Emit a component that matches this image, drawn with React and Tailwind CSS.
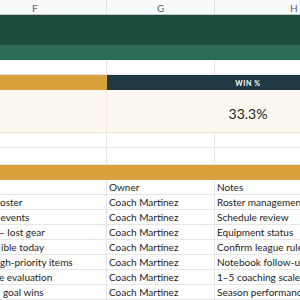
const ROWS = [
  { left: 'oster', ml: 'ml-0', owner: 'Coach Martinez', note: 'Roster management' },
  { left: 'events', ml: 'ml-[0.5px]', owner: 'Coach Martinez', note: 'Schedule review' },
  { left: '– lost gear', ml: 'ml-[-1px]', owner: 'Coach Martinez', note: 'Equipment status' },
  { left: 'ible today', ml: 'ml-[1px]', owner: 'Coach Martinez', note: 'Confirm league rules' },
  { left: 'gh-priority items', ml: 'ml-0', owner: 'Coach Martinez', note: 'Notebook follow-up' },
  { left: 'e evaluation', ml: 'ml-[-1px]', owner: 'Coach Martinez', note: '1–5 coaching scale' },
  { left: 'goal wins', ml: 'ml-[3px]', owner: 'Coach Martinez', note: 'Season performance' },
];

function GridRow({ h = 'h-[15px]', children }) {
  return <div className={`flex ${h} border-b border-[#e6e6e6] bg-white`}>{children}</div>;
}

function Cell({ w, children, className = '' }) {
  return (
    <div className={`${w} shrink-0 overflow-hidden whitespace-nowrap border-r border-[#e6e6e6] flex items-center ${className}`}>
      {children}
    </div>
  );
}

export default function App() {
  return (
    <div
      className="w-[300px] h-[300px] overflow-hidden bg-white text-[10px] text-[#222]"
      style={{ fontFamily: 'Lato, "Liberation Sans", sans-serif' }}
    >
      {/* column letters */}
      <div className="flex h-[15px] bg-[#f8f9fa] border-b border-[#c4c7c5] text-[#5f6368] text-[10px]">
        <div className="w-[107px] shrink-0 border-r border-[#e1e3e1] relative">
          <span className="absolute left-[32px] top-[1px]">F</span>
        </div>
        <div className="w-[108px] shrink-0 border-r border-[#e1e3e1] relative">
          <span className="absolute left-[50px] top-[1px]">G</span>
        </div>
        <div className="flex-1 relative">
          <span className="absolute left-[75px] top-[1px]">H</span>
        </div>
      </div>

      {/* title bands */}
      <div className="h-[30px] bg-[#1b4b3c]" />
      <div className="h-[15px] bg-[#2f6c56]" />

      <GridRow>
        <Cell w="w-[107px]" />
        <Cell w="w-[108px]" />
        <div className="flex-1" />
      </GridRow>

      {/* win % label */}
      <div className="flex h-[15px]">
        <div className="w-[107px] shrink-0 bg-[#d8a33c]" />
        <div className="flex-1 bg-[#1f3a44] relative">
          <span className="absolute left-[141px] -translate-x-1/2 top-[3px] text-[7px] font-bold tracking-[0.6px] text-white whitespace-nowrap">
            WIN %
          </span>
        </div>
      </div>

      {/* win % value */}
      <div className="flex h-[43px] bg-[#fcf8f0] border-b border-[#ece7dc]">
        <div className="w-[107px] shrink-0 border-r border-[#efe9df]" />
        <div className="flex-1 relative">
          <span className="absolute left-[141px] -translate-x-1/2 top-[13px] text-[14px] text-[#222]">33.3%</span>
        </div>
      </div>

      <GridRow>
        <Cell w="w-[107px]" />
        <Cell w="w-[108px]" />
        <div className="flex-1" />
      </GridRow>
      <GridRow h="h-[17px]">
        <Cell w="w-[107px]" />
        <Cell w="w-[108px]" />
        <div className="flex-1" />
      </GridRow>

      <div className="h-[15px] bg-[#d8a33c]" />

      <GridRow>
        <Cell w="w-[107px]" />
        <Cell w="w-[108px]" className="pl-[2px]">Owner</Cell>
        <div className="flex-1 flex items-center pl-[2px] whitespace-nowrap overflow-hidden">Notes</div>
      </GridRow>

      {ROWS.map((r) => (
        <GridRow key={r.note}>
          <Cell w="w-[107px]">
            <span className={r.ml}>{r.left}</span>
          </Cell>
          <Cell w="w-[108px]" className="pl-[2px]">{r.owner}</Cell>
          <div className="flex-1 flex items-center pl-[2px] whitespace-nowrap overflow-hidden">{r.note}</div>
        </GridRow>
      ))}
    </div>
  );
}
